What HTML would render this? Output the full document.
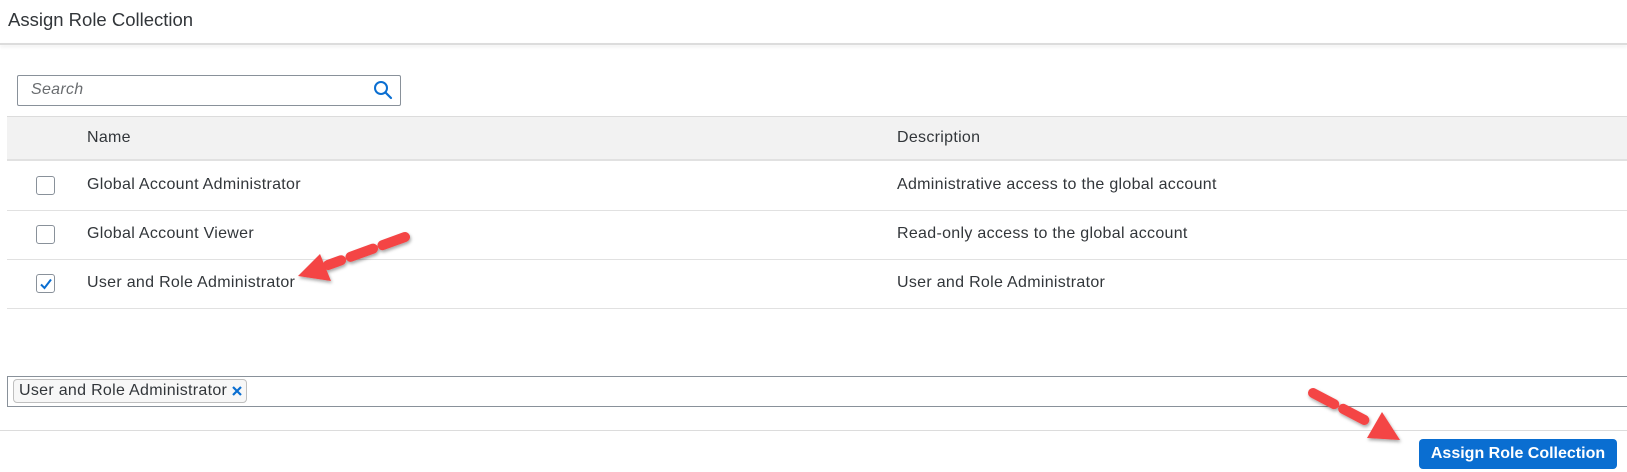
<!DOCTYPE html>
<html><head><style>
*{margin:0;padding:0;box-sizing:border-box}
body{width:1627px;height:472px;background:#fff;font-family:"Liberation Sans",Arial,sans-serif;color:#32363a;position:relative;overflow:hidden}
.a{position:absolute}
.t{font-size:16px;white-space:nowrap;letter-spacing:0.3px}
.cb{position:absolute;left:36px;width:19px;height:19px;border:1px solid #89919a;border-radius:3px;background:#fff}
.hl{position:absolute;left:7px;right:0;height:1px;background:#e1e1e1}
</style></head><body>
<div class="a t" style="left:8px;top:9px;font-size:18.5px;letter-spacing:0">Assign Role Collection</div>
<div class="a" style="left:0;right:0;top:43px;height:2px;background:#dcdcdc;box-shadow:0 2px 3px rgba(0,0,0,.08)"></div>

<div class="a" style="left:17px;top:75px;width:384px;height:31px;border:1px solid #89919a;border-radius:2px"></div>
<div class="a t" style="left:31px;top:81px;font-style:italic;color:#6a6d70">Search</div>
<svg class="a" style="left:372px;top:79px" width="22" height="22" viewBox="0 0 22 22"><circle cx="9" cy="9" r="6" fill="none" stroke="#0a6ed1" stroke-width="2"/><line x1="13.5" y1="13.5" x2="19" y2="19" stroke="#0a6ed1" stroke-width="2.2" stroke-linecap="round"/></svg>

<div class="a" style="left:7px;right:0;top:116px;height:45px;background:#f2f2f2;border-top:1px solid #dcdcdc;border-bottom:2px solid #e1e1e1"></div>
<div class="a t" style="left:87px;top:129px">Name</div>
<div class="a t" style="left:897px;top:129px">Description</div>

<div class="cb" style="top:176px"></div>
<div class="a t" style="left:87px;top:176px">Global Account Administrator</div>
<div class="a t" style="left:897px;top:176px">Administrative access to the global account</div>
<div class="hl" style="top:210px"></div>

<div class="cb" style="top:225px"></div>
<div class="a t" style="left:87px;top:225px">Global Account Viewer</div>
<div class="a t" style="left:897px;top:225px">Read-only access to the global account</div>
<div class="hl" style="top:259px"></div>

<div class="cb" style="top:274px"></div>
<svg class="a" style="left:38px;top:276px" width="16" height="16" viewBox="0 0 16 16"><path d="M3 8.5 L6.5 12 L13 3.5" fill="none" stroke="#0a6ed1" stroke-width="2"/></svg>
<div class="a t" style="left:87px;top:274px">User and Role Administrator</div>
<div class="a t" style="left:897px;top:274px">User and Role Administrator</div>
<div class="hl" style="top:308px"></div>

<div class="a" style="left:7px;right:-2px;top:376px;height:31px;border:1px solid #89919a"></div>
<div class="a" style="left:13px;top:379px;width:234px;height:24px;border:1px solid #bfbfbf;border-radius:4px;background:#f7f7f7"></div>
<div class="a t" style="left:19px;top:382px">User and Role Administrator</div>
<svg class="a" style="left:231px;top:385px" width="12" height="12" viewBox="0 0 12 12"><path d="M2 2L10 10M10 2L2 10" stroke="#0a6ed1" stroke-width="2.2"/></svg>

<div class="a" style="left:0;right:0;top:430px;height:1px;background:#dcdcdc"></div>
<div class="a" style="left:1419px;top:439px;width:198px;height:30px;background:#0a6ed1;border-radius:4px;color:#fff;font-weight:bold;font-size:16px;text-align:center;line-height:30px">Assign Role Collection</div>

<svg class="a" style="left:0;top:0" width="1627" height="472">
<defs><filter id="s"><feDropShadow dx="1" dy="2" stdDeviation="1.5" flood-opacity=".35"/></filter></defs>
<g filter="url(#s)">
<line x1="405" y1="237" x2="328" y2="265" stroke="#f44444" stroke-width="10" stroke-dasharray="24,10" stroke-linecap="round"/>
<polygon points="298,276 320,254 331,281" fill="#f44444"/>
<line x1="1313" y1="393" x2="1372" y2="424" stroke="#f44444" stroke-width="10" stroke-dasharray="24,10" stroke-linecap="round"/>
<polygon points="1400,440 1382,412 1367,438" fill="#f44444"/>
</g></svg>
</body></html>
